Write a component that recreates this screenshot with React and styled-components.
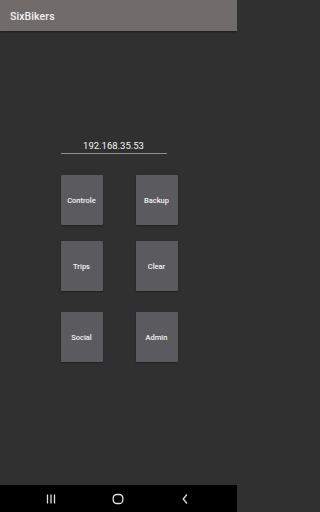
import React from "react";
import styled, { createGlobalStyle } from "styled-components";

const GlobalStyle = createGlobalStyle`
  html, body {
    margin: 0;
    padding: 0;
    background: #303030;
  }
  body {
    font-family: Roboto, "Liberation Sans", sans-serif;
  }
`;

const Screen = styled.div`
  display: flex;
  flex-direction: column;
  width: 237px;
  height: 512px;
  background: #303030;
  overflow: hidden;
`;

const AppBar = styled.header`
  display: flex;
  align-items: center;
  height: 31px;
  padding: 0 10px;
  background: #716b6a;
  box-shadow: 0 1px 2px rgba(0, 0, 0, 0.45);
  position: relative;
  z-index: 1;
`;

const Title = styled.h1`
  margin: 0;
  font-size: 10.5px;
  font-weight: 500;
  color: #f2f2f2;
  letter-spacing: 0.1px;
  padding-top: 2px;
`;

const Content = styled.main`
  flex: 1;
  display: flex;
  flex-direction: column;
  align-items: center;
  padding-top: 109px;
`;

const Panel = styled.div`
  width: 117px;
  margin-left: 1px;
  display: flex;
  flex-direction: column;
`;

const AddressField = styled.div`
  width: 106px;
  display: flex;
  flex-direction: column;
  align-items: center;
`;

const AddressText = styled.span`
  font-size: 9.5px;
  line-height: 12px;
  color: #f4f4f4;
  padding-bottom: 1px;
`;

const Underline = styled.div`
  width: 100%;
  height: 1px;
  background: #8f8f8f;
`;

const ButtonRow = styled.div`
  display: flex;
  justify-content: space-between;
  margin-top: ${(props) => props.gap}px;
`;

const Tile = styled.button`
  width: 42px;
  height: 50px;
  padding: 0;
  border: none;
  border-radius: 1px;
  background: #5b5a5f;
  color: #f2f2f2;
  font-family: Roboto, "Liberation Sans", sans-serif;
  font-size: 7.5px;
  font-weight: 500;
  box-shadow: 0 1px 2px rgba(0, 0, 0, 0.35);
`;

const NavBar = styled.nav`
  height: 27px;
  background: #000;
  display: flex;
  align-items: center;
  justify-content: center;
  gap: 55px;
  padding-right: 1px;
`;

const NavIcon = styled.svg`
  width: 12px;
  height: 12px;
`;

const rows = [
  { gap: 21, items: ["Controle", "Backup"] },
  { gap: 16, items: ["Trips", "Clear"] },
  { gap: 21, items: ["Social", "Admin"] },
];

function App() {
  return (
    <Screen>
      <GlobalStyle />
      <AppBar>
        <Title>SixBikers</Title>
      </AppBar>
      <Content>
        <Panel>
          <AddressField>
            <AddressText>192.168.35.53</AddressText>
            <Underline />
          </AddressField>
          {rows.map((row) => (
            <ButtonRow key={row.items[0]} gap={row.gap}>
              {row.items.map((label) => (
                <Tile key={label}>{label}</Tile>
              ))}
            </ButtonRow>
          ))}
        </Panel>
      </Content>
      <NavBar>
        <NavIcon viewBox="0 0 12 12">
          <path d="M2.5 1.5v9M6 1.5v9M9.5 1.5v9" stroke="#e0e0e0" strokeWidth="1.3" />
        </NavIcon>
        <NavIcon viewBox="0 0 12 12">
          <rect x="1.2" y="1.5" width="9.6" height="9" rx="3.6" fill="none" stroke="#e0e0e0" strokeWidth="1.3" />
        </NavIcon>
        <NavIcon viewBox="0 0 12 12">
          <path d="M8 1.5L4.2 6L8 10.5" fill="none" stroke="#e0e0e0" strokeWidth="1.3" />
        </NavIcon>
      </NavBar>
    </Screen>
  );
}

export default App;
